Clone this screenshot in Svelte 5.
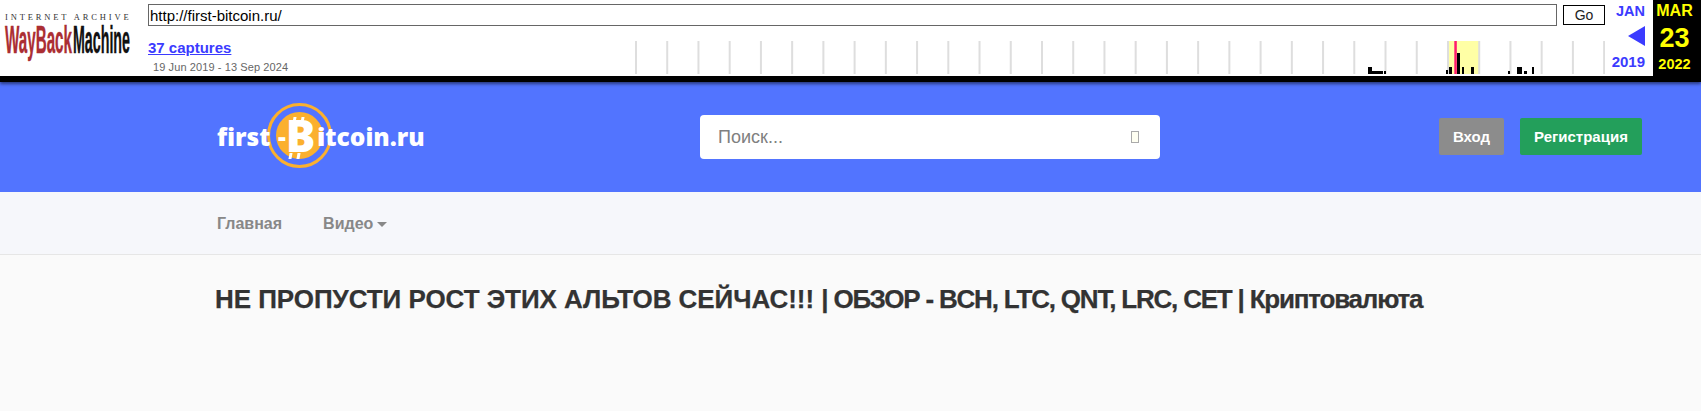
<script>
    const ticks = Array.from({ length: 32 }, (_, i) => 1 + i * 31.23);
    // capture bars as [x, width, height], relative to the sparkline's left edge
    const bars = [
        [734, 4, 7], [738, 11, 3], [750, 2, 3],
        [812, 2, 4], [815, 3, 7], [823, 3, 21], [828, 2, 7], [837, 3, 7],
        [874, 2, 3], [883, 5, 7], [890, 3, 3], [898, 2, 7]
    ];
</script>

<div class="page">
    <div class="toolbar">
        <div class="ia-logo">
            <div class="ia-name">INTERNET ARCHIVE</div>
            <svg class="wm" width="126" height="37" viewBox="0 0 126 37">
                <text x="0" y="30" textLength="67" lengthAdjust="spacingAndGlyphs" class="wm-red">WayBack</text>
                <text x="68" y="30" textLength="57" lengthAdjust="spacingAndGlyphs" class="wm-black">Machine</text>
            </svg>
        </div>
        <div class="tb-main">
            <div class="url-row">
                <input class="url" value="http://first-bitcoin.ru/" readonly />
                <button class="go">Go</button>
            </div>
            <div class="cap-row">
                <div class="captures">
                    <a href="#top">37 captures</a>
                    <div class="dates">19 Jun 2019 - 13 Sep 2024</div>
                </div>
                <svg class="spark" width="971" height="33" viewBox="0 0 971 33">
                    <rect x="814" y="0" width="31" height="33" fill="#ffffa5" />
                    {#each ticks as t}
                        <rect x={t} y="0" width="2" height="33" fill="#dedede" />
                    {/each}
                    {#each bars as b}
                        <rect x={b[0]} y={33 - b[2]} width={b[1]} height={b[2]} fill="#000" />
                    {/each}
                    <rect x="820.3" y="0" width="2.5" height="33" fill="#ff1a6e" />
                </svg>
            </div>
        </div>
        <div class="nav-dates">
            <div class="month">JAN</div>
            <div class="arrow"></div>
            <div class="year">2019</div>
        </div>
        <div class="cur-date">
            <div class="c-month">MAR</div>
            <div class="c-day">23</div>
            <div class="c-year">2022</div>
        </div>
    </div>

    <header class="site-head">
        <div class="logo">
            <span class="ring"><span class="disc"></span></span>
            <span class="ticks top"></span>
            <span class="ticks bottom"></span>
            <span class="logo-text">first <span class="dash">-</span><span class="big-b">B</span>itcoin.ru</span>
        </div>
        <div class="search">
            <span class="search-text">Поиск...</span>
            <span class="tofu"></span>
        </div>
        <div class="auth">
            <button class="btn gray">Вход</button>
            <button class="btn green">Регистрация</button>
        </div>
    </header>

    <nav class="menu">
        <a href="#top">Главная</a>
        <a href="#top">Видео<span class="caret"></span></a>
    </nav>

    <main class="content">
        <h1><span class="caps">НЕ ПРОПУСТИ РОСТ ЭТИХ АЛЬТОВ СЕЙЧАС!!!</span> <span class="rest">| ОБЗОР - BCH, LTC, QNT, LRC, CET | Криптовалюта</span></h1>
    </main>
</div>

<style>
    :global(body) {
        margin: 0;
        background: #fafafa;
    }

    .page {
        height: 411px;
        overflow: hidden;
        font-family: "Liberation Sans", Arial, sans-serif;
    }

    .toolbar {
        display: flex;
        height: 76px;
        background: #fff;
        border-bottom: 6px solid #000;
        box-shadow: 0 2px 3px rgba(0, 0, 0, 0.5);
        position: relative;
    }

    .ia-logo {
        width: 148px;
        flex: none;
        padding: 13px 0 0 5px;
        box-sizing: border-box;
    }

    .ia-name {
        font-family: "Liberation Serif", serif;
        font-size: 8.5px;
        letter-spacing: 2.85px;
        color: #333;
        white-space: nowrap;
        line-height: 9px;
    }

    .wm {
        display: block;
        margin-top: 1px;
        overflow: visible;
    }

    .wm text {
        font-family: "Liberation Sans", sans-serif;
        font-size: 39px;
        font-weight: 700;
        stroke-width: 0.4px;
    }

    .wm-red {
        fill: #ab2e33;
        stroke: #ab2e33;
    }

    .wm-black {
        fill: #111;
        stroke: #111;
    }

    .tb-main {
        width: 1457px;
        flex: none;
    }

    .url-row {
        display: flex;
        align-items: center;
        gap: 6px;
        padding-top: 4px;
    }

    .url {
        width: 1409px;
        height: 22px;
        box-sizing: border-box;
        padding: 0 1px;
        margin: 0;
        border: 1px solid #666;
        outline: 1px solid #666;
        outline-offset: -1px;
        font: 15px "Liberation Sans", Arial, sans-serif;
        color: #000;
        background: #fff;
    }

    .go {
        width: 42px;
        height: 20px;
        box-sizing: border-box;
        padding: 0;
        margin-left: 0;
        background: #fff;
        border: 1px solid #000;
        font: 14px "Liberation Sans", Arial, sans-serif;
        color: #222;
    }

    .cap-row {
        display: flex;
        justify-content: space-between;
        padding-top: 9px;
    }

    .captures {
        padding-top: 5px;
    }

    .captures a {
        display: block;
        color: #3b3bff;
        font-size: 15px;
        font-weight: 700;
        line-height: 15px;
    }

    .dates {
        font-size: 11px;
        letter-spacing: 0.1px;
        color: #666;
        margin: 6px 0 0 5px;
        line-height: 12px;
    }

    .spark {
        display: block;
        margin-top: 6px;
    }

    .nav-dates {
        width: 48px;
        flex: none;
        box-sizing: border-box;
        display: flex;
        flex-direction: column;
        align-items: flex-end;
        color: #3b3bff;
        font-weight: 700;
        padding-right: 8px;
    }

    .month {
        font-size: 14.5px;
        line-height: 14px;
        margin-top: 4px;
    }

    .arrow {
        width: 0;
        height: 0;
        margin-top: 8px;
        border-top: 10px solid transparent;
        border-bottom: 10px solid transparent;
        border-right: 17px solid #3b3bff;
    }

    .year {
        font-size: 15px;
        line-height: 14px;
        margin-top: 9px;
    }

    .cur-date {
        flex: 1;
        padding-right: 5px;
        background: #000;
        color: #ffff00;
        font-weight: 700;
        text-align: center;
    }

    .c-month {
        font-size: 16px;
        line-height: 14px;
        margin-top: 4px;
    }

    .c-day {
        font-size: 27px;
        line-height: 28px;
        margin-top: 6px;
    }

    .c-year {
        font-size: 14.5px;
        line-height: 14px;
        margin-top: 5px;
    }

    .site-head {
        height: 110px;
        background: #5274ff;
        display: flex;
        align-items: flex-start;
        padding-left: 217px;
    }

    .logo {
        position: relative;
        width: 207px;
        height: 70px;
        margin-top: 20px;
        flex: none;
    }

    .ring {
        position: absolute;
        left: 50px;
        top: 1px;
        width: 65px;
        height: 65px;
        box-sizing: border-box;
        border: 3px solid #fbb02e;
        border-radius: 50%;
        display: flex;
        align-items: center;
        justify-content: center;
    }

    .disc {
        width: 47px;
        height: 47px;
        border-radius: 50%;
        background: #fbb02e;
    }

    /* the two strokes through the top and bottom of the bitcoin B */
    .ticks {
        position: absolute;
        width: 11px;
        height: 6px;
        border-left: 3px solid #fff;
        border-right: 3px solid #fff;
        box-sizing: border-box;
        transform: skewX(-10deg);
    }

    .top {
        left: 76px;
        top: 15px;
    }

    .bottom {
        left: 72px;
        top: 51px;
    }

    .logo-text {
        position: absolute;
        left: 0;
        top: 0;
        line-height: 70px;
        font-family: "Open Sans", sans-serif;
        font-size: 24.5px;
        font-weight: 800;
        color: #fff;
        white-space: nowrap;
    }

    .dash {
        margin-left: 1px;
    }

    .big-b {
        font-size: 44px;
        vertical-align: -6px;
        line-height: 1px;
        margin-right: 2px;
    }

    .search {
        width: 460px;
        height: 44px;
        margin-top: 33px;
        margin-left: 276px;
        flex: none;
        box-sizing: border-box;
        padding: 0 21px 0 18px;
        background: #fff;
        border-radius: 4px;
        display: flex;
        align-items: center;
        justify-content: space-between;
    }

    .search-text {
        font-family: "Liberation Sans", sans-serif;
        font-size: 18px;
        color: #808080;
    }

    .tofu {
        width: 8px;
        height: 12px;
        box-sizing: border-box;
        border: 1px solid #aaa;
        background: #fffff2;
    }

    .auth {
        display: flex;
        gap: 16px;
        margin-top: 36px;
        margin-left: 279px;
    }

    .btn {
        height: 37px;
        padding: 0;
        border: 0;
        border-radius: 2px;
        color: #fff;
        font-family: "Liberation Sans", sans-serif;
        font-size: 15px;
        font-weight: 700;
    }

    .gray {
        width: 65px;
        background: #8c8c8c;
    }

    .green {
        width: 122px;
        background: #239f5b;
    }

    .menu {
        height: 60px;
        padding-top: 2px;
        background: #f6f7fb;
        border-bottom: 1px solid #e6e6e6;
        display: flex;
        align-items: center;
        gap: 41px;
        padding-left: 217px;
    }

    .menu a {
        color: #888;
        font-size: 16px;
        font-weight: 700;
        text-decoration: none;
    }

    .caret {
        display: inline-block;
        margin-left: 4px;
        vertical-align: 2px;
        border-top: 5px solid #888;
        border-left: 5px solid transparent;
        border-right: 5px solid transparent;
    }

    .content {
        padding-left: 215px;
    }

    h1 {
        margin: 28px 0 0;
        font-size: 26px;
        line-height: 32px;
        font-weight: 700;
        color: #333;
        white-space: nowrap;
        -webkit-text-stroke: 0.25px #333;
    }

    .caps {
        letter-spacing: -0.05px;
    }

    .rest {
        letter-spacing: -1.2px;
    }
</style>
